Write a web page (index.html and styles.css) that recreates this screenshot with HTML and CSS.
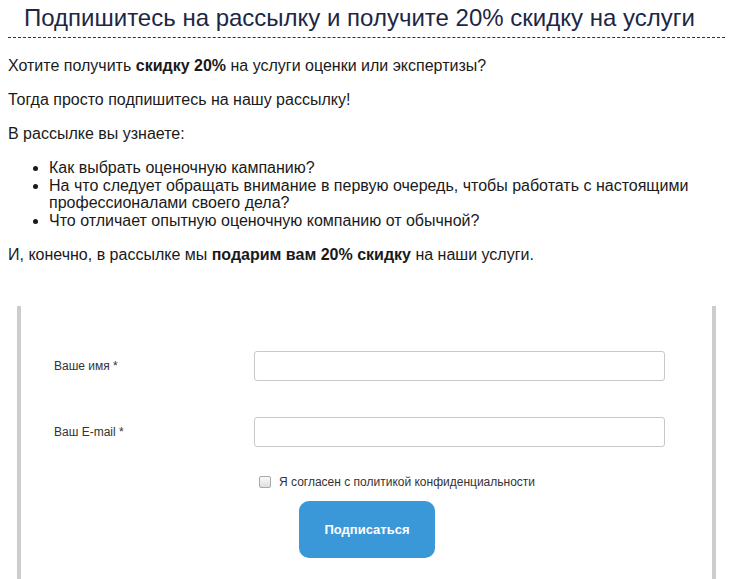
FILE: index.html
```html
<!DOCTYPE html>
<html lang="ru">
  <head>
    <meta charset="UTF-8" />
    <meta name="viewport" content="width=device-width, initial-scale=1.0" />
    <title>Подписка на рассылку</title>
    <link rel="stylesheet" href="styles.css">
  </head>
  <body>
    <h1 class="title">Подпишитесь на рассылку и получите 20% скидку на услуги</h1>

    <div class="intro">
      <p>Хотите получить <strong>скидку 20%</strong> на услуги оценки или экспертизы?</p>
      <p>Тогда просто подпишитесь на нашу рассылку!</p>
      <p>В рассылке вы узнаете:</p>
      <ul>
        <li>Как выбрать оценочную кампанию?</li>
        <li>На что следует обращать внимание в первую очередь, чтобы работать с настоящими профессионалами своего дела?</li>
        <li>Что отличает опытную оценочную компанию от обычной?</li>
      </ul>
      <p>И, конечно, в рассылке мы <strong>подарим вам 20% скидку</strong> на наши услуги.</p>
    </div>

    <form class="subscribe" onsubmit="return false;">
      <div class="field">
        <label for="name">Ваше имя *</label>
        <input type="text" id="name" />
      </div>
      <div class="field">
        <label for="email">Ваш E-mail *</label>
        <input type="email" id="email" />
      </div>
      <div class="actions">
        <label class="agree">
          <input type="checkbox" />
          <span>Я согласен с политикой конфиденциальности</span>
        </label>
        <button type="submit">Подписаться</button>
      </div>
    </form>
  </body>
</html>
```

FILE: styles.css
```css
body {
  margin: 0;
  padding: 0 8px;
  font-family: "Liberation Sans", Arial, sans-serif;
  color: #1a1a1a;
  background: white;
}
.title {
  margin: 0;
  padding: 4px 16px 5px;
  font-size: 24px;
  line-height: 28px;
  font-weight: normal;
  color: #1d2744;
  border-bottom: 1px dashed #333;
  width: 685px;
}
.intro {
  padding-top: 19px;
  font-size: 16px;
  line-height: 17.5px;
}
.intro p {
  margin: 0 0 16.5px;
}
.intro ul {
  margin: 0 0 17px;
  padding-left: 41px;
}
.subscribe {
  margin: 42px 0 0 9px;
  padding: 45px 0 30px 33px;
  box-sizing: border-box;
  width: 699px;
  border-left: 4px solid #cdcdcd;
  border-right: 4px solid #cdcdcd;
}
.field {
  display: flex;
  align-items: center;
  margin-bottom: 36px;
}
.field label {
  width: 200px;
  font-size: 12px;
  color: #333;
}
.field input {
  width: 411px;
  height: 30px;
  box-sizing: border-box;
  border: 1px solid #c8c8c8;
  border-radius: 3px;
  padding: 4px 8px;
  font-family: inherit;
}
.actions {
  margin-left: 200px;
  margin-top: -8px;
}
.agree {
  display: flex;
  align-items: center;
  padding-left: 5px;
  font-size: 12px;
  color: #333;
}
.agree input {
  appearance: none;
  margin: 0 8px 0 0;
  width: 12px;
  height: 12px;
  border: 1px solid #a9a9a9;
  border-radius: 2px;
  background: linear-gradient(#fafafa, #dedede);
}
button {
  margin: 12px 0 0 45px;
  width: 136px;
  height: 57px;
  border: none;
  border-radius: 10px;
  background: #3a98d8;
  color: white;
  font-family: inherit;
  font-size: 13px;
  font-weight: bold;
  cursor: pointer;
}
button:hover {
  background: #2f86c2;
}
```
